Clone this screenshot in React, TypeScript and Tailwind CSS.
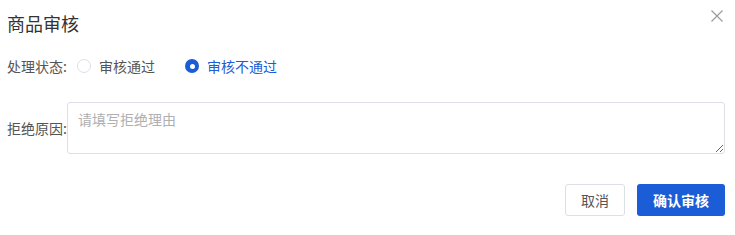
function Radio({ checked, label }: { checked?: boolean; label: string }) {
  return (
    <label className="flex items-center gap-[8px] cursor-pointer">
      {checked ? (
        <span className="flex h-[14px] w-[14px] items-center justify-center rounded-full bg-[#1a5dd6]">
          <span className="h-[5px] w-[5px] rounded-full bg-white" />
        </span>
      ) : (
        <span className="h-[14px] w-[14px] rounded-full border border-[#dcdfe6] bg-white" />
      )}
      <span className={checked ? "text-[#1a5dd6]" : "text-[#555]"}>{label}</span>
    </label>
  );
}

export default function App() {
  return (
    <div className="h-[235px] w-[735px] bg-white pl-[7px] pr-[10px] pt-[8px] text-[14px] font-['Noto_Sans_CJK_SC','Noto_Sans',sans-serif] text-[#555]">
      <div className="flex items-start justify-between">
        <h2 className="mt-[2px] text-[18px] font-normal leading-[26px] text-[#333]">商品审核</h2>
        <svg className="mr-[2px] mt-[2px] h-[12px] w-[12px]" viewBox="0 0 12 12" fill="none" stroke="#999" strokeWidth="1.1">
          <path d="M0.5 0.5L11.5 11.5M11.5 0.5L0.5 11.5" />
        </svg>
      </div>

      <div className="mt-[20px] flex h-[20px] items-center">
        <span className="w-[70px]">处理状态:</span>
        <div className="flex items-center gap-[30px]">
          <Radio label="审核通过" />
          <Radio checked label="审核不通过" />
        </div>
      </div>

      <div className="mt-[26px] flex items-center">
        <span className="w-[60px] shrink-0">拒绝原因:</span>
        <textarea
          className="h-[52px] flex-1 rounded-[3px] border border-[#dcdfe6] px-[10px] py-[5px] text-[14px] leading-[22px] text-[#333] outline-none placeholder:text-[#b0b0b0]"
          placeholder="请填写拒绝理由"
        />
      </div>

      <div className="mt-[30px] flex justify-end gap-[12px]">
        <button className="h-[32px] w-[60px] rounded-[3px] border border-[#dcdfe6] bg-white text-[#555]">
          取消
        </button>
        <button className="h-[32px] w-[88px] rounded-[3px] bg-[#1a5dd6] font-bold text-white">
          确认审核
        </button>
      </div>
    </div>
  );
}
